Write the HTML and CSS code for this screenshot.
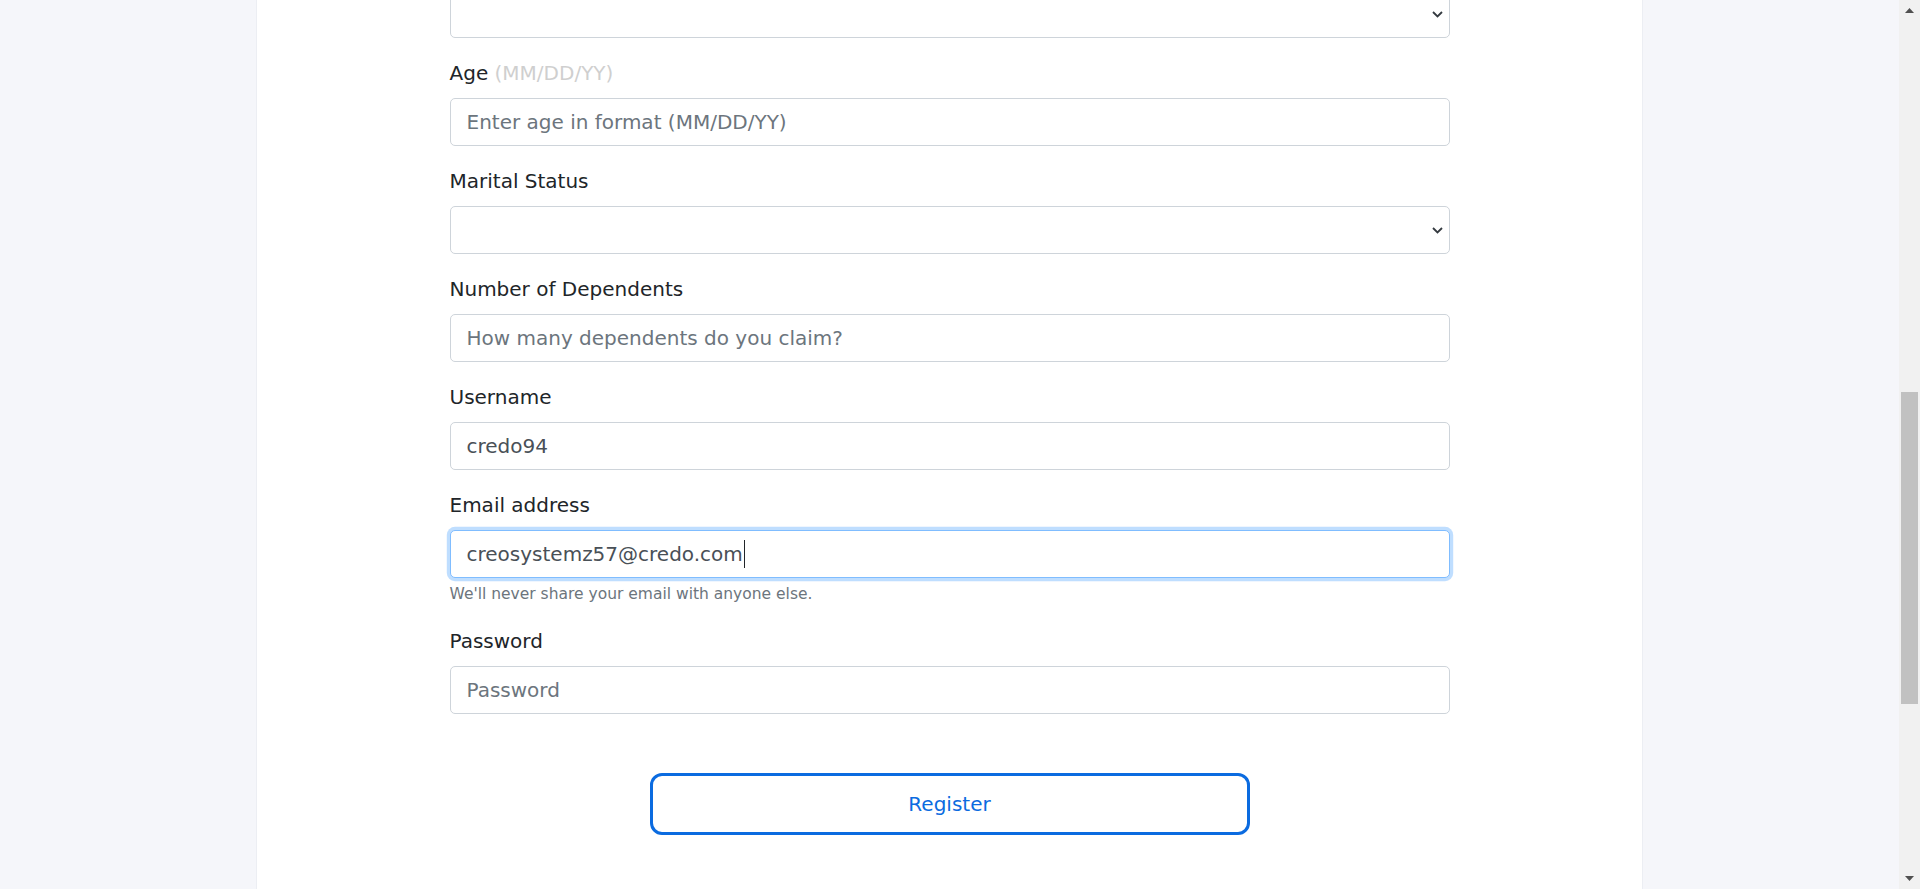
FILE: index.html
```html
<!DOCTYPE html>
<html lang="en">
<head>
<meta charset="utf-8">
<title>Register</title>
<link rel="stylesheet" href="styles.css">
</head>
<body>
<div class="window">
  <main class="page">
    <section class="card">
      <form class="form">
        <div class="form-group partial">
          <select class="form-control form-select"><option></option></select>
        </div>
        <div class="form-group">
          <label class="form-label">Age <span class="hint">(MM/DD/YY)</span></label>
          <input class="form-control" type="text" placeholder="Enter age in format (MM/DD/YY)">
        </div>
        <div class="form-group">
          <label class="form-label">Marital Status</label>
          <select class="form-control form-select"><option></option></select>
        </div>
        <div class="form-group">
          <label class="form-label">Number of Dependents</label>
          <input class="form-control" type="text" placeholder="How many dependents do you claim?">
        </div>
        <div class="form-group">
          <label class="form-label">Username</label>
          <input class="form-control" type="text" value="credo94">
        </div>
        <div class="form-group">
          <label class="form-label">Email address</label>
          <div class="form-control is-focused"><span class="value">creosystemz57@credo.com</span><span class="caret"></span></div>
          <small class="form-text">We'll never share your email with anyone else.</small>
        </div>
        <div class="form-group">
          <label class="form-label">Password</label>
          <input class="form-control" type="password" placeholder="Password">
        </div>
        <div class="actions">
          <button class="btn-register" type="button">Register</button>
        </div>
      </form>
    </section>
  </main>
  <div class="scrollbar">
    <div class="sb-btn">
      <svg width="9" height="5" viewBox="0 0 9 5"><polygon points="0,5 4.5,0 9,5" fill="#505050"/></svg>
    </div>
    <div class="sb-track"><div class="sb-thumb"></div></div>
    <div class="sb-btn">
      <svg width="9" height="5" viewBox="0 0 9 5"><polygon points="0,0 9,0 4.5,5" fill="#505050"/></svg>
    </div>
  </div>
</div>
</body>
</html>
```
FILE: styles.css
```css
* {
  box-sizing: border-box;
}

html, body {
  margin: 0;
  padding: 0;
  height: 889px;
  overflow: hidden;
}

body {
  background: #f5f6fa;
  font-family: "DejaVu Sans", "Liberation Sans", sans-serif;
  color: #212529;
}

.window {
  display: flex;
  height: 889px;
}

.page {
  flex: 1;
  display: flex;
  justify-content: center;
  overflow: hidden;
}

.card {
  width: 1387px;
  height: 100%;
  background: #ffffff;
  border-left: 1px solid #eceef3;
  border-right: 1px solid #eceef3;
}

.form {
  width: 1000px;
  margin: 0 auto;
}

.form-group {
  margin-bottom: 20px;
}

.form-group.partial {
  margin-top: -10px;
}

.form-label {
  display: block;
  font-size: 20px;
  line-height: 30px;
  margin-bottom: 10px;
  color: #212529;
}

.hint {
  color: #cfcfcf;
}

.form-control {
  display: block;
  width: 100%;
  height: 48px;
  margin: 0;
  padding: 8px 16px;
  font-family: "DejaVu Sans", "Liberation Sans", sans-serif;
  font-size: 20px;
  line-height: 30px;
  color: #495057;
  background-color: #ffffff;
  border: 1px solid #ced4da;
  border-radius: 5px;
  outline: none;
}

.form-control::placeholder {
  color: #6c757d;
  opacity: 1;
}

.form-select {
  appearance: none;
  -webkit-appearance: none;
  background-image: url("data:image/svg+xml,%3Csvg xmlns='http://www.w3.org/2000/svg' width='11' height='7' viewBox='0 0 11 7'%3E%3Cpath d='M1 1l4.5 4.5L10 1' fill='none' stroke='%23343a40' stroke-width='1.8'/%3E%3C/svg%3E");
  background-repeat: no-repeat;
  background-position: right 6px center;
  background-size: 11px 7px;
}

.is-focused {
  display: flex;
  align-items: center;
  border-color: #80bdff;
  box-shadow: 0 0 0 0.2rem rgba(0, 123, 255, 0.25);
}

.caret {
  display: inline-block;
  width: 1px;
  height: 28px;
  background: #212529;
  margin-left: 1px;
}

.form-text {
  display: block;
  margin-top: 4px;
  font-size: 15.5px;
  line-height: 24px;
  color: #6c757d;
}

.actions {
  display: flex;
  justify-content: center;
  padding-top: 39px;
}

.btn-register {
  width: 600px;
  height: 62px;
  padding: 13px 16px;
  font-family: "DejaVu Sans", "Liberation Sans", sans-serif;
  font-size: 20px;
  line-height: 30px;
  color: #0b6be0;
  background: #ffffff;
  border: 3px solid #0b6be0;
  border-radius: 12px;
  cursor: pointer;
}

.scrollbar {
  width: 21px;
  display: flex;
  flex-direction: column;
  background: #f1f1f1;
}

.sb-btn {
  height: 21px;
  display: flex;
  align-items: center;
  justify-content: center;
}

.sb-track {
  flex: 1;
  padding: 371px 2px 0;
}

.sb-thumb {
  height: 312px;
  background: #c1c1c1;
}
```
